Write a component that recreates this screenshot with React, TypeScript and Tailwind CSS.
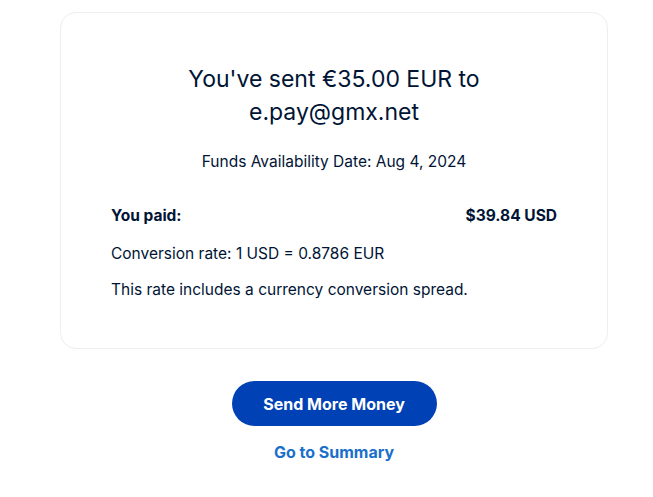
export default function App() {
  return (
    <div className="min-h-screen bg-white pt-3 font-['Inter',sans-serif] text-[#001435]">
      <div className="ml-[60px] w-[548px]">
        <div className="rounded-2xl border border-[#eeeeee] px-[50px] pb-[47px] pt-[50px]">
          <h1 className="text-center text-[23px] leading-[33px] font-normal">
            You've sent €35.00 EUR to
            <br />
            e.pay@gmx.net
          </h1>
          <p className="mt-[21px] text-center text-[15.5px]">Funds Availability Date: Aug 4, 2024</p>
          <div className="mt-[31px] flex items-center justify-between text-[15.5px] font-bold">
            <span>You paid:</span>
            <span>$39.84 USD</span>
          </div>
          <p className="mt-[14px] text-[15.5px]">Conversion rate: 1 USD = 0.8786 EUR</p>
          <p className="mt-[13px] text-[15.5px]">This rate includes a currency conversion spread.</p>
        </div>
        <div className="mt-[32px] flex flex-col items-center">
          <button className="h-[45px] w-[205px] rounded-full bg-[#0041b5] text-[16px] font-bold text-white">
            Send More Money
          </button>
          <a className="mt-[14px] text-[16px] font-bold text-[#1a6fca]">Go to Summary</a>
        </div>
      </div>
    </div>
  );
}
